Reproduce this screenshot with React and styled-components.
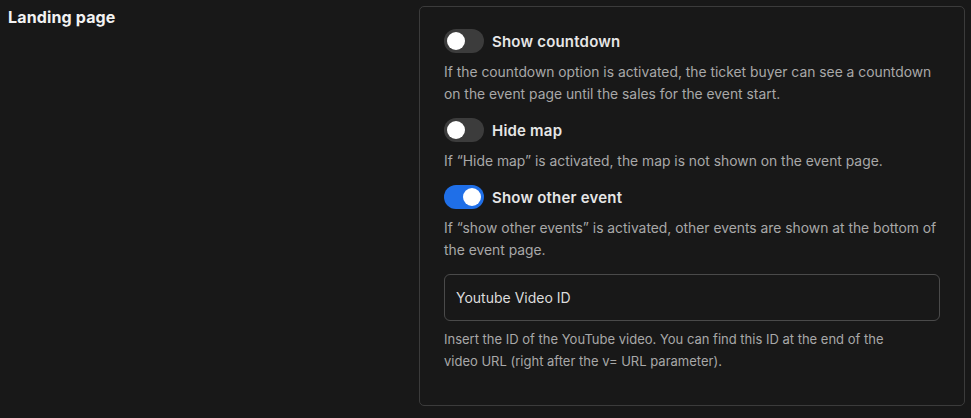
import React, { useState } from "react";
import styled, { createGlobalStyle } from "styled-components";

const Global = createGlobalStyle`
  html, body { margin: 0; padding: 0; background: #181818; }
  body { font-family: Inter, "Noto Sans", sans-serif; -webkit-font-smoothing: antialiased; }
  * { box-sizing: border-box; }
`;

const Page = styled.div`
  display: flex;
  align-items: flex-start;
  padding: 6px 6px 10px 8px;
  min-height: 418px;
  background: #181818;
`;

const SectionTitle = styled.h2`
  width: 411px;
  margin: 0;
  font-size: 16px;
  line-height: 22px;
  font-weight: 700;
  letter-spacing: 0.15px;
  color: #f2f2f2;
`;

const Card = styled.div`
  width: 546px;
  border: 1px solid #3b3b3b;
  border-radius: 5px;
  padding: 22px 24px 33px 24px;
  display: flex;
  flex-direction: column;
`;

const Option = styled.div`
  display: flex;
  flex-direction: column;
  gap: 8px;
  margin-bottom: 13px;
`;

const ToggleRow = styled.label`
  display: flex;
  align-items: center;
  gap: 8px;
  height: 24px;
  cursor: pointer;
`;

const Track = styled.span`
  position: relative;
  width: 40px;
  height: 24px;
  border-radius: 12px;
  background: ${(p) => (p.$on ? "#1f6fe8" : "#3c3c3c")};
  flex-shrink: 0;
`;

const Knob = styled.span`
  position: absolute;
  top: 3px;
  left: ${(p) => (p.$on ? "19px" : "3px")};
  width: 18px;
  height: 18px;
  border-radius: 50%;
  background: #ffffff;
`;

const Label = styled.span`
  font-size: 15px;
  font-weight: 600;
  letter-spacing: 0.2px;
  color: #e6e6e6;
`;

const Desc = styled.p`
  margin: 0;
  font-size: 13.85px;
  line-height: 22px;
  color: #a8a8a8;
`;

const Help = styled.p`
  margin: 0;
  max-width: 462px;
  font-size: 13px;
  line-height: 22px;
  color: #a8a8a8;
`;

const Input = styled.input`
  width: 100%;
  height: 47px;
  border: 1px solid #4a4a4a;
  border-radius: 6px;
  background: transparent;
  padding: 0 11px;
  font-family: Inter, "Noto Sans", sans-serif;
  font-size: 14px;
  color: #dcdcdc;
  outline: none;
  margin-bottom: 7px;
  &::placeholder { color: #dcdcdc; }
`;

function Toggle({ on, label, onClick }) {
  return (
    <ToggleRow onClick={onClick}>
      <Track $on={on}>
        <Knob $on={on} />
      </Track>
      <Label>{label}</Label>
    </ToggleRow>
  );
}

export default function App() {
  const [state, setState] = useState({ countdown: false, map: false, other: true });
  const flip = (k) => setState((s) => ({ ...s, [k]: !s[k] }));
  return (
    <>
      <Global />
      <Page>
        <SectionTitle>Landing page</SectionTitle>
        <Card>
          <Option>
            <Toggle on={state.countdown} label="Show countdown" onClick={() => flip("countdown")} />
            <Desc>
              If the countdown option is activated, the ticket buyer can see a countdown on the event page until the sales for the event start.
            </Desc>
          </Option>
          <Option>
            <Toggle on={state.map} label="Hide map" onClick={() => flip("map")} />
            <Desc>If “Hide map” is activated, the map is not shown on the event page.</Desc>
          </Option>
          <Option>
            <Toggle on={state.other} label="Show other event" onClick={() => flip("other")} />
            <Desc>
              If “show other events” is activated, other events are shown at the bottom of the event page.
            </Desc>
          </Option>
          <Input placeholder="Youtube Video ID" />
          <Help>
            Insert the ID of the YouTube video. You can find this ID at the end of the video URL (right after the v= URL parameter).
          </Help>
        </Card>
      </Page>
    </>
  );
}
